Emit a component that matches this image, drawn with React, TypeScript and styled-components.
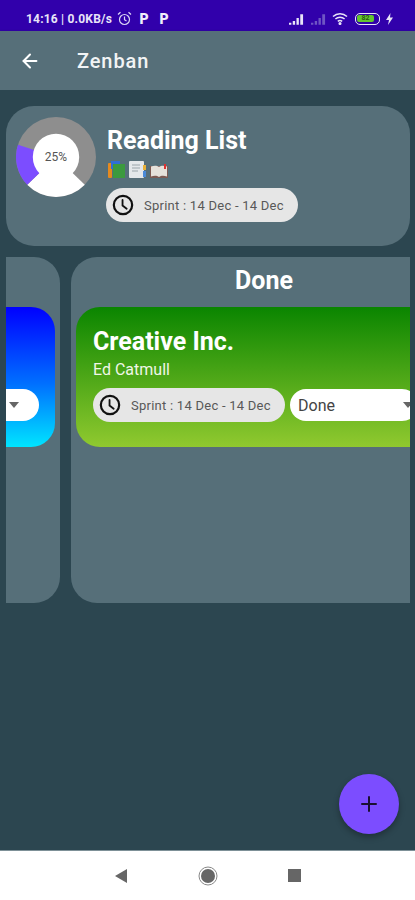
import React from "react";
import styled, { createGlobalStyle } from "styled-components";
import { ArrowLeft, Plus } from "lucide-react";

const polar = (deg: number, r: number) => {
    const a = ((deg - 90) * Math.PI) / 180;
    return `${50 + r * Math.cos(a)} ${50 + r * Math.sin(a)}`;
};

const slice = (from: number, to: number) =>
    `M50 50 L${polar(from, 50)} A50 50 0 ${to - from > 180 ? 1 : 0} 1 ${polar(to, 50)} Z`;

const ClockIcon = () => (
    <svg width="22" height="22" viewBox="0 0 24 24" fill="none" stroke="#111" strokeWidth="2.4" strokeLinecap="round">
        <circle cx="12" cy="12" r="10" />
        <path d="M11.5 6.5V12.5L16 16" strokeWidth="2" />
    </svg>
);

const SprintPill = () => (
    <Pill>
        <ClockIcon />
        <PillText>Sprint : 14 Dec - 14 Dec</PillText>
    </Pill>
);

const Caret = () => (
    <svg width="10" height="6" viewBox="0 0 10 6">
        <path d="M0 0H10L5 6Z" fill="#666" />
    </svg>
);

const SignalIcon = ({ color }: { color: string }) => (
    <svg width="15" height="12" viewBox="0 0 16 12">
        <path d="M0 12V10H2.5V12ZM4 12V8H6.5V12ZM8 12V5H10.5V12ZM12 12V1H15V12Z" fill={color} />
    </svg>
);

export default function App() {
    return (
        <Page>
            <GlobalStyle />
            <StatusBar>
                <StatusGroup>
                    <StatusText>14:16 | 0.0KB/s</StatusText>
                    <svg width="15" height="15" viewBox="0 0 15 15" fill="none" stroke="#dcd6f5" strokeWidth="1.2">
                        <circle cx="7.5" cy="8.5" r="5" />
                        <path d="M7.5 5.5V8.7L9.5 10M1 3.5L3.5 1.2M14 3.5L11.5 1.2" />
                    </svg>
                    <ParkBadge>P</ParkBadge>
                    <ParkBadge>P</ParkBadge>
                </StatusGroup>
                <StatusGroup $right>
                    <SignalIcon color="#e8e4f8" />
                    <SignalIcon color="#6f55c4" />
                    <svg width="16" height="13" viewBox="0 0 16 13" fill="none" stroke="#e8e4f8" strokeWidth="1.5">
                        <path d="M1 4.5C5 .8 11 .8 15 4.5M3.4 7C6 4.7 10 4.7 12.6 7M5.8 9.4C7 8.4 9 8.4 10.2 9.4" />
                        <circle cx="8" cy="11.5" r=".8" fill="#e8e4f8" />
                    </svg>
                    <Battery>
                        <BatteryFill>82</BatteryFill>
                    </Battery>
                    <svg width="7" height="12" viewBox="0 0 7 12">
                        <path d="M4.5 0L0 7H3L2 12L7 4.5H4Z" fill="#e8e4f8" />
                    </svg>
                </StatusGroup>
            </StatusBar>

            <AppBar>
                <ArrowLeft size={22} color="#fff" strokeWidth={2.2} />
                <AppTitle>Zenban</AppTitle>
            </AppBar>

            <Main>
                <ProjectCard>
                    <Donut>
                        <svg width="80" height="80" viewBox="0 0 100 100">
                            <circle cx="50" cy="50" r="50" fill="#8e8e8e" />
                            <path d={slice(134, 226)} fill="#fff" />
                            <path d={slice(226, 288)} fill="#7c4dff" />
                            <circle cx="50" cy="50" r="29" fill="#fff" />
                        </svg>
                        <DonutLabel>25%</DonutLabel>
                    </Donut>
                    <ProjectInfo>
                        <ProjectTitle>Reading List</ProjectTitle>
                        <BookIcons>
                            <svg width="18" height="19" viewBox="0 0 18 19">
                                <rect x="0" y="3" width="4" height="15" rx="1" fill="#e58a1f" />
                                <rect x="3" y="1" width="9" height="8" fill="#2f6fd6" />
                                <rect x="5" y="4" width="12" height="14" fill="#3c9a3e" />
                            </svg>
                            <svg width="18" height="19" viewBox="0 0 18 19">
                                <rect x="0" y="1" width="15" height="17" rx="1" fill="#e4e8ea" />
                                <path d="M3 5H11M3 8H11M3 11H9" stroke="#9aa5aa" strokeWidth="1" />
                                <rect x="14" y="5" width="3" height="5" fill="#e8b23a" />
                                <rect x="14" y="11" width="3" height="6" fill="#4a8ad8" />
                            </svg>
                            <svg width="19" height="15" viewBox="0 0 19 15">
                                <path d="M0 2H18V14H0Z" fill="#7d5a52" />
                                <path d="M1 2.5C4 1.5 7 1.5 9 3C11 1.5 14 1.5 17 2.5V12.5C14 11.5 11 11.5 9 13C7 11.5 4 11.5 1 12.5Z" fill="#e6e1da" />
                                <rect x="14" y="0" width="2" height="5" fill="#d33" />
                            </svg>
                        </BookIcons>
                        <SprintPill />
                    </ProjectInfo>
                </ProjectCard>

                <Board>
                    <PrevColumn>
                        <BlueCard>
                            <CutSelect>
                                <Caret />
                            </CutSelect>
                        </BlueCard>
                    </PrevColumn>
                    <Column>
                        <ColumnTitle>Done</ColumnTitle>
                        <GreenCard>
                            <CardTitle>Creative Inc.</CardTitle>
                            <CardOwner>Ed Catmull</CardOwner>
                            <CardFooter>
                                <SprintPill />
                                <StatusSelect>
                                    <span>Done</span>
                                    <Caret />
                                </StatusSelect>
                            </CardFooter>
                        </GreenCard>
                    </Column>
                </Board>

                <Fab>
                    <Plus size={24} color="#1a1030" strokeWidth={2} />
                </Fab>
            </Main>

            <NavBar>
                <svg width="14" height="16" viewBox="0 0 14 16">
                    <path d="M13 1V15L1 8Z" fill="#666" />
                </svg>
                <svg width="20" height="20" viewBox="0 0 20 20">
                    <circle cx="10" cy="10" r="9" fill="none" stroke="#888" strokeWidth="1" />
                    <circle cx="10" cy="10" r="7" fill="#666" />
                </svg>
                <NavSquare />
            </NavBar>
        </Page>
    );
}

const GlobalStyle = createGlobalStyle`
    html, body {
        margin: 0;
        padding: 0;
        background: #2c4650;
    }
    * {
        box-sizing: border-box;
    }
`;

const Page = styled.div`
    width: 415px;
    height: 900px;
    display: flex;
    flex-direction: column;
    overflow: hidden;
    font-family: Roboto, "Liberation Sans", sans-serif;
`;

const StatusBar = styled.div`
    height: 31px;
    flex-shrink: 0;
    background: #3100ab;
    display: flex;
    align-items: center;
    justify-content: space-between;
    padding: 6px 22px 0 26px;
`;

const StatusGroup = styled.div<{ $right?: boolean }>`
    display: flex;
    align-items: center;
    gap: ${(props) => (props.$right ? "6.5px" : "5px")};
`;

const StatusText = styled.span`
    color: #e8e4f8;
    font-size: 12px;
    font-weight: 700;
    letter-spacing: 0.2px;
`;

const ParkBadge = styled.span`
    width: 14px;
    color: #f0edfb;
    font-size: 14px;
    font-weight: 900;
    text-align: center;
    & + & {
        margin-left: 1px;
    }
    &:first-of-type {
        margin-left: 2px;
    }
`;

const Battery = styled.div`
    width: 25px;
    height: 12px;
    padding: 1.5px;
    border: 1px solid #e8e4f8;
    border-radius: 5px;
    display: flex;
`;

const BatteryFill = styled.div`
    width: 17px;
    border-radius: 2px;
    background: #63c72e;
    color: #2d5a12;
    font-size: 7px;
    font-weight: 700;
    line-height: 7px;
    text-align: center;
`;

const AppBar = styled.div`
    height: 59px;
    flex-shrink: 0;
    background: #566f79;
    display: flex;
    align-items: center;
    padding: 0 0 0 19px;
    gap: 36px;
    box-shadow: 0 1px 3px rgba(0, 0, 0, 0.3);
    position: relative;
`;

const AppTitle = styled.span`
    color: #f2f4f5;
    font-size: 20px;
    font-weight: 500;
    letter-spacing: 0.9px;
`;

const Main = styled.div`
    flex: 1;
    position: relative;
    background: #2c4650;
    padding: 16px 5px 0 6px;
    display: flex;
    flex-direction: column;
    gap: 11px;
`;

const ProjectCard = styled.div`
    height: 140px;
    flex-shrink: 0;
    background: #566f79;
    border-radius: 28px;
    display: flex;
    padding: 11px 10px;
    gap: 10px;
`;

const Donut = styled.div`
    width: 80px;
    height: 80px;
    position: relative;
    flex-shrink: 0;
    svg {
        display: block;
    }
`;

const DonutLabel = styled.span`
    position: absolute;
    inset: 0;
    display: flex;
    align-items: center;
    justify-content: center;
    color: #555;
    font-size: 12px;
`;

const ProjectInfo = styled.div`
    display: flex;
    flex-direction: column;
    align-items: flex-start;
    padding-top: 9px;
`;

const ProjectTitle = styled.div`
    color: #fff;
    font-size: 25px;
    font-weight: 700;
    line-height: 30px;
    margin-left: 1px;
`;

const BookIcons = styled.div`
    display: flex;
    align-items: flex-end;
    gap: 3px;
    height: 19px;
    margin: 4px 0 9px 2px;
`;

const Pill = styled.div`
    height: 34px;
    width: 192px;
    flex-shrink: 0;
    padding: 0 6px;
    background: #e6e6e6;
    border-radius: 17px;
    display: flex;
    align-items: center;
    gap: 10px;
`;

const PillText = styled.span`
    color: #585858;
    font-size: 13px;
    letter-spacing: 0.25px;
    white-space: nowrap;
`;

const Board = styled.div`
    height: 346px;
    flex-shrink: 0;
    display: flex;
    gap: 11px;
    overflow: hidden;
`;

const PrevColumn = styled.div`
    width: 54px;
    flex-shrink: 0;
    background: #566f79;
    border-radius: 0 26px 26px 0;
    padding: 50px 5px 0 0;
`;

const BlueCard = styled.div`
    height: 140px;
    background: linear-gradient(180deg, #0000ff 0%, #0070ff 55%, #00e5ff 100%);
    border-radius: 0 24px 24px 0;
    padding: 82px 16px 0 0;
`;

const CutSelect = styled.div`
    height: 32px;
    background: #fff;
    border-radius: 0 16px 16px 0;
    display: flex;
    align-items: center;
    padding-left: 3px;
`;

const Column = styled.div`
    width: 400px;
    flex-shrink: 0;
    background: #566f79;
    border-radius: 26px;
    padding: 0 0 0 5px;
`;

const ColumnTitle = styled.div`
    height: 50px;
    width: 376px;
    color: #fff;
    font-size: 25px;
    font-weight: 700;
    line-height: 48px;
    text-align: center;
`;

const GreenCard = styled.div`
    height: 140px;
    background: linear-gradient(180deg, #0a8500 0%, #90c92f 100%);
    border-radius: 24px;
    padding: 20px 16px 0 17px;
`;

const CardTitle = styled.div`
    color: #fff;
    font-size: 25px;
    font-weight: 700;
    line-height: 30px;
`;

const CardOwner = styled.div`
    color: #f0f6e8;
    font-size: 16px;
    line-height: 26px;
    margin-bottom: 5px;
`;

const CardFooter = styled.div`
    display: flex;
    align-items: center;
    gap: 5px;
`;

const StatusSelect = styled.div`
    width: 128px;
    height: 32px;
    flex-shrink: 0;
    background: #fff;
    border-radius: 16px;
    display: flex;
    align-items: center;
    justify-content: space-between;
    padding: 0 5px 0 8px;
    color: #444;
    font-size: 16px;
`;

const Fab = styled.button`
    position: absolute;
    right: 16px;
    bottom: 16px;
    width: 60px;
    height: 60px;
    padding: 0;
    border: none;
    border-radius: 50%;
    background: #7c4dff;
    display: flex;
    align-items: center;
    justify-content: center;
    box-shadow: 0 3px 6px rgba(0, 0, 0, 0.3);
`;

const NavBar = styled.div`
    height: 50px;
    flex-shrink: 0;
    background: #fff;
    border-top: 1px solid #7d9097;
    display: flex;
    align-items: center;
    justify-content: center;
    gap: 70px;
    padding-right: 1px;
`;

const NavSquare = styled.div`
    width: 13px;
    height: 13px;
    background: #666;
`;
